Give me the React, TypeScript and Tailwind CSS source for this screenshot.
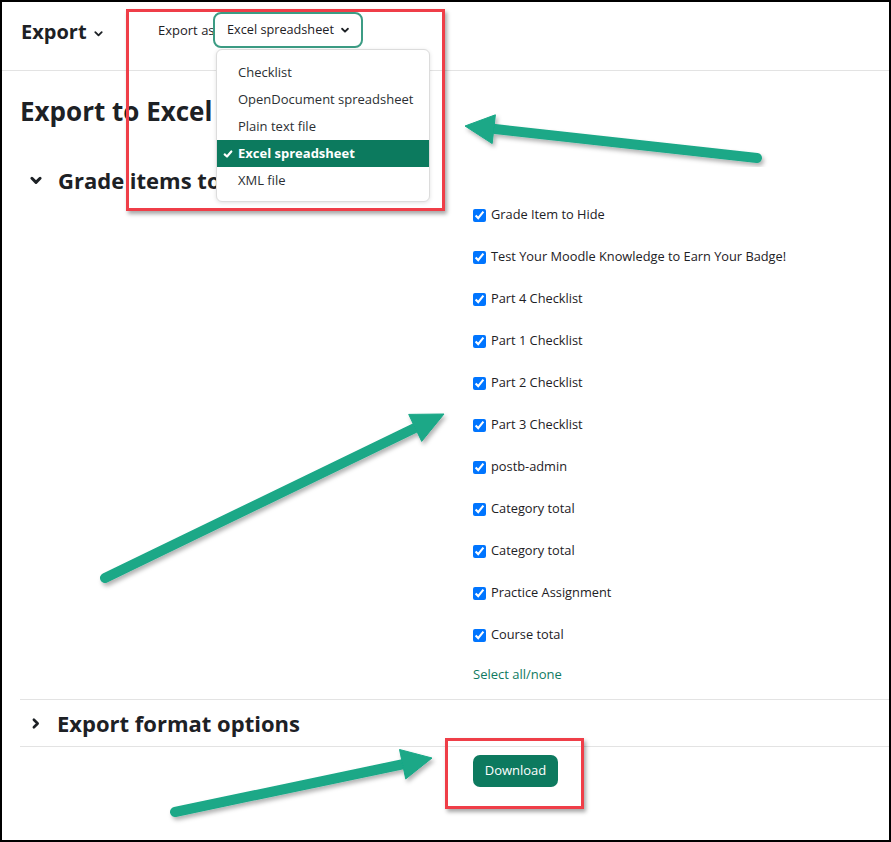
import React from 'react';

const items = [
    'Grade Item to Hide',
    'Test Your Moodle Knowledge to Earn Your Badge!',
    'Part 4 Checklist',
    'Part 1 Checklist',
    'Part 2 Checklist',
    'Part 3 Checklist',
    'postb-admin',
    'Category total',
    'Category total',
    'Practice Assignment',
    'Course total',
];

const formats = ['Checklist', 'OpenDocument spreadsheet', 'Plain text file', 'Excel spreadsheet', 'XML file'];

const ChevronDown: React.FC<{ className?: string; w?: number }> = ({ className, w = 2 }) => (
    <svg viewBox="0 0 12 12" className={className} fill="none" stroke="currentColor" strokeWidth={w} strokeLinecap="round" strokeLinejoin="round">
        <path d="M2.5 4.5 6 8l3.5-3.5" />
    </svg>
);

const ChevronRight: React.FC<{ className?: string }> = ({ className }) => (
    <svg viewBox="0 0 12 12" className={className} fill="none" stroke="currentColor" strokeWidth={2.4} strokeLinecap="round" strokeLinejoin="round">
        <path d="M4.5 2.5 8 6l-3.5 3.5" />
    </svg>
);

// annotation arrow: tail, tip and the two back corners of the head
const Arrow: React.FC<{ tail: [number, number]; back: [number, number]; tip: [number, number]; c1: [number, number]; c2: [number, number] }> = ({ tail, back, tip, c1, c2 }) => (
    <g filter="url(#shadow)" fill="#1aa887" stroke="#1aa887">
        <line x1={tail[0]} y1={tail[1]} x2={back[0]} y2={back[1]} strokeWidth={10} strokeLinecap="round" />
        <polygon points={`${tip[0]},${tip[1]} ${c1[0]},${c1[1]} ${c2[0]},${c2[1]}`} strokeWidth={1} strokeLinejoin="round" />
    </g>
);

const App: React.FC = () => {
    return (
        <div className="relative w-[891px] h-[842px] overflow-hidden bg-white border-2 border-black text-[#1d2125] font-['Open_Sans',sans-serif]">
            {/* top bar */}
            <div className="h-[69px] border-b border-[#e3e3e3] flex items-start pt-[10px] pl-[19px]">
                <div className="w-[137px] h-[36px] flex items-center gap-[6px] mt-[2px]">
                    <span className="text-[20px] font-bold">Export</span>
                    <ChevronDown className="w-[11px] h-[11px] mt-[3px]" />
                </div>
                <div className="w-[55px] h-[36px] flex items-center text-[13px] whitespace-nowrap mt-[1px]">Export as</div>
                <div className="relative">
                    <div className="w-[150px] h-[36px] border-2 border-[#3c9c84] rounded-[8px] flex items-center pl-[12px] gap-[6px] text-[12.7px]">
                        Excel spreadsheet
                        <ChevronDown className="w-[10px] h-[10px]" w={2.2} />
                    </div>
                    <div className="absolute left-[3px] top-[37px] w-[214px] bg-white border border-[#dcdcdc] rounded-[6px] shadow-[0_1px_4px_rgba(0,0,0,0.12)] pt-[9px] pb-[7px] z-10">
                        {formats.map((f) => f === 'Excel spreadsheet' ? (
                            <div key={f} className="h-[27px] flex items-center bg-[#0c7a5e] text-white font-bold text-[13px] pl-[6px]">
                                <svg viewBox="0 0 12 12" className="w-[10px] h-[10px] mr-[5px]" fill="none" stroke="currentColor" strokeWidth={2.6} strokeLinecap="round" strokeLinejoin="round">
                                    <path d="M2 6.5 4.8 9 10 3" />
                                </svg>
                                {f}
                            </div>
                        ) : (
                            <div key={f} className="h-[27px] flex items-center pl-[21px] text-[13px] text-[#2b2f33]">{f}</div>
                        ))}
                    </div>
                </div>
            </div>

            {/* page body */}
            <div className="pl-[18px]">
                <h2 className="mt-[24px] text-[26px] leading-[32px] font-bold">Export to Excel</h2>

                <div className="mt-[39px] h-[28px] flex items-center">
                    <ChevronDown className="w-[14px] h-[14px] ml-[9px] mr-[15px]" w={2.6} />
                    <span className="text-[22px] font-bold">Grade items to export</span>
                </div>

                <div className="grid grid-cols-[453px_1fr]">
                    <div />
                    <div>
                        {items.map((it, i) => (
                            <label key={i} className="h-[42px] flex items-center gap-[5px] text-[12.8px]">
                                <input type="checkbox" checked readOnly className="w-[13px] h-[13px] m-0 accent-[#0075ff]" />
                                {it}
                            </label>
                        ))}
                        <div className="h-[38px] flex items-center text-[13px] text-[#0f7a61]">Select all/none</div>
                    </div>
                </div>

                <div className="mt-[5px] border-t border-b border-[#e3e3e3] h-[48px] flex items-center">
                    <ChevronRight className="w-[13px] h-[13px] ml-[9px] mr-[15px]" />
                    <span className="text-[22px] font-bold">Export format options</span>
                </div>

                <div className="grid grid-cols-[453px_1fr] mt-[8px]">
                    <div />
                    <div>
                        <button className="w-[85px] h-[32px] rounded-[7px] bg-[#0d7a5f] text-white text-[13px]">Download</button>
                    </div>
                </div>
            </div>

            {/* annotations */}
            <div className="absolute left-[124px] top-[7px] w-[319px] h-[202px] border-[3px] border-[#ef3e48] shadow-[2px_3px_4px_rgba(0,0,0,0.35)] z-20" />
            <div className="absolute left-[443px] top-[736px] w-[139px] h-[71px] border-[3px] border-[#ef3e48] shadow-[2px_3px_4px_rgba(0,0,0,0.35)] z-20" />
            <svg className="absolute left-[-2px] top-[-2px] z-30 pointer-events-none" width={891} height={842}>
                <defs>
                    <filter id="shadow" x="-10%" y="-10%" width="120%" height="130%">
                        <feDropShadow dx="2" dy="3" stdDeviation="2" floodColor="#000" floodOpacity="0.3" />
                    </filter>
                </defs>
                <Arrow tail={[757, 158]} back={[495, 129]} tip={[465, 126]} c1={[495.4, 114.8]} c2={[492.2, 143.6]} />
                <Arrow tail={[105, 578]} back={[417, 427]} tip={[444, 414]} c1={[421.7, 441.4]} c2={[408.7, 414.4]} />
                <Arrow tail={[175, 812]} back={[404, 764]} tip={[432, 758]} c1={[405.7, 778.9]} c2={[399.5, 749.5]} />
            </svg>
        </div>
    );
};

export default App;
